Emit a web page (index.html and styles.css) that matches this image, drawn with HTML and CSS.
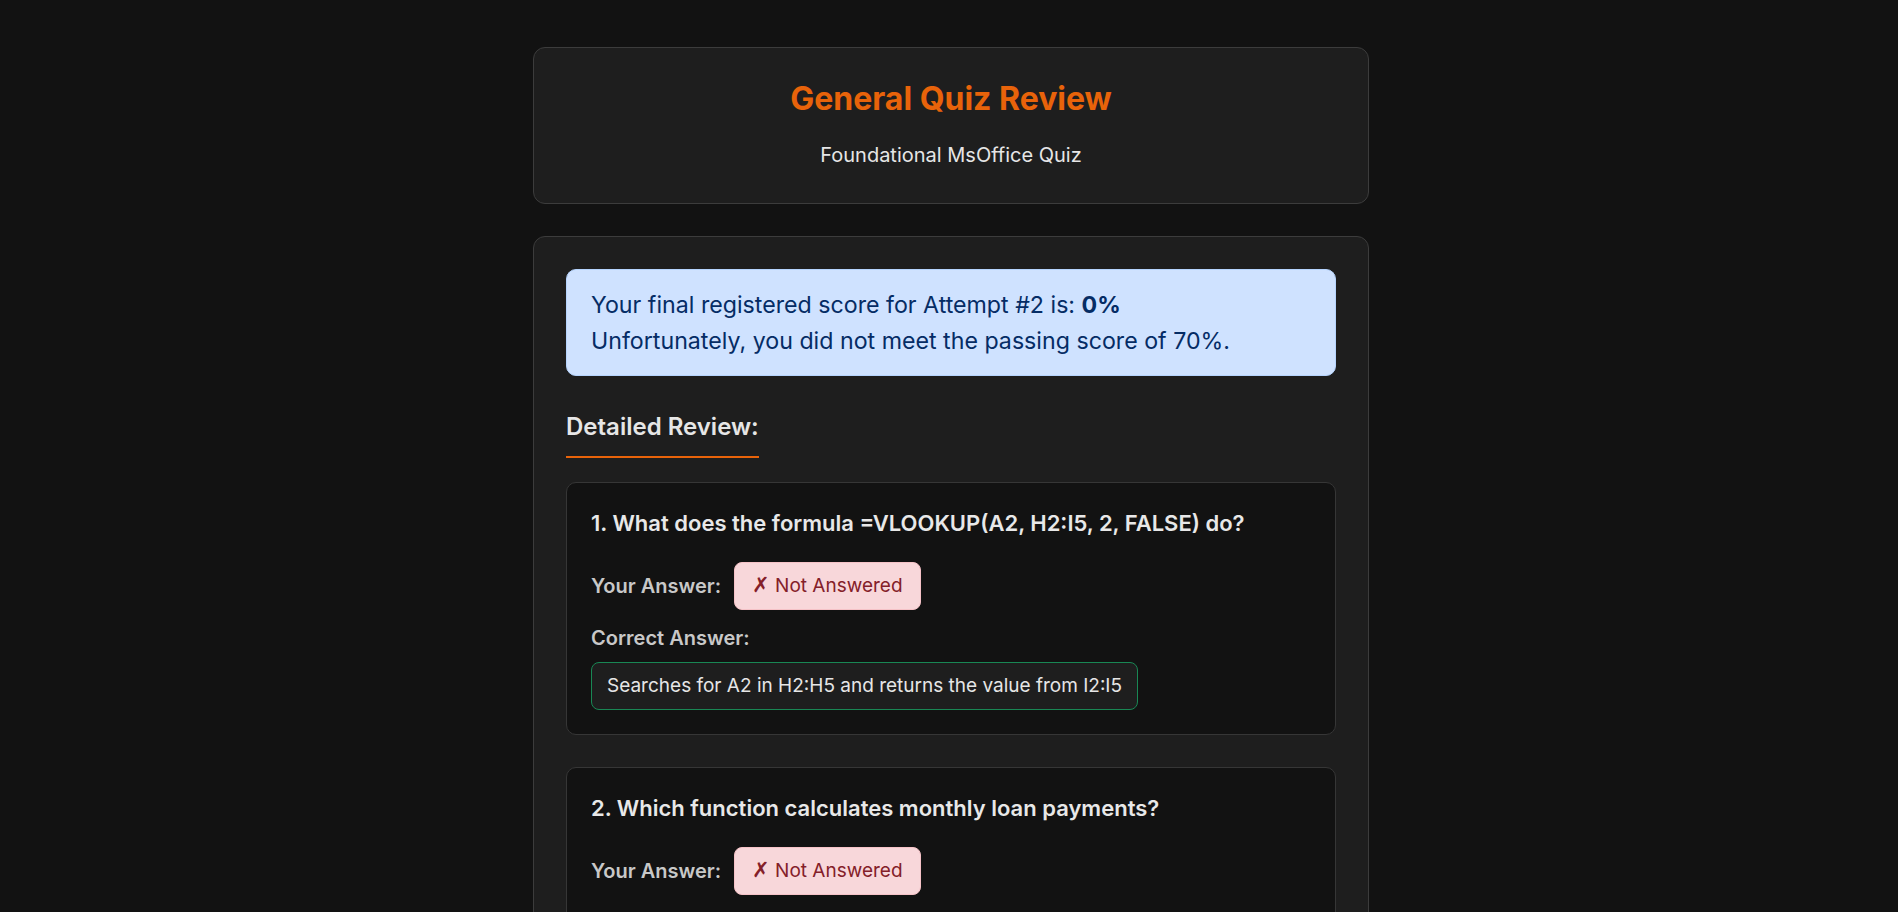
FILE: index.html
```html
<!DOCTYPE html>
<html lang="en">
<head>
<meta charset="utf-8">
<title>General Quiz Review</title>
<link rel="stylesheet" href="styles.css">
</head>
<body>
<div class="container">
  <header class="card header-card">
    <h1 class="title">General Quiz Review</h1>
    <p class="subtitle">Foundational MsOffice Quiz</p>
  </header>

  <main class="card main-card">
    <div class="alert">
      Your final registered score for Attempt #2 is: <strong>0%</strong><br>
      Unfortunately, you did not meet the passing score of 70%.
    </div>

    <h3 class="section-title">Detailed Review:</h3>

    <div class="question-card">
      <h4 class="question">1. What does the formula =VLOOKUP(A2, H2:I5, 2, FALSE) do?</h4>
      <div class="answer-row">
        <span class="label">Your Answer:</span>
        <span class="badge-wrong"><span class="x-icon">✗</span> Not Answered</span>
      </div>
      <div class="label correct-label">Correct Answer:</div>
      <div class="correct-box">Searches for A2 in H2:H5 and returns the value from I2:I5</div>
    </div>

    <div class="question-card">
      <h4 class="question">2. Which function calculates monthly loan payments?</h4>
      <div class="answer-row">
        <span class="label">Your Answer:</span>
        <span class="badge-wrong"><span class="x-icon">✗</span> Not Answered</span>
      </div>
      <div class="label correct-label">Correct Answer:</div>
      <div class="correct-box">=PMT(rate, nper, pv)</div>
    </div>
  </main>
</div>
</body>
</html>
```

FILE: styles.css
```css
* { box-sizing: border-box; }

html, body {
  margin: 0;
  background: #121212;
  color: #e0e0e0;
  font-family: Inter, "Noto Sans", "Liberation Sans", sans-serif;
}

body {
  padding: 0 0 0 4px;
}

.container {
  width: 836px;
  margin: 0 auto;
  padding: 47px 0 40px;
  display: flex;
  flex-direction: column;
  gap: 32px;
}

.card {
  background: #1e1e1e;
  border: 1px solid #3c3c3c;
  border-radius: 12px;
}

.header-card {
  padding: 32px 32px 33px;
  text-align: center;
}

.title {
  margin: 0 0 22px;
  font-size: 32px;
  line-height: 38px;
  font-weight: 700;
  color: #e8630a;
}

.subtitle {
  margin: 0;
  font-size: 20px;
  line-height: 30px;
  color: #e6e6e6;
}

.main-card {
  padding: 32px;
}

.alert {
  background: #cfe2ff;
  border: 1px solid #b6d4fe;
  color: #052c65;
  border-radius: 10px;
  padding: 17px 24px 16px;
  font-size: 23.2px;
  line-height: 36px;
}

.alert strong { font-weight: 700; }

.section-title {
  display: inline-block;
  margin: 36px 0 24px;
  padding-bottom: 15px;
  border-bottom: 2px solid #e8630a;
  font-size: 24px;
  line-height: 29px;
  font-weight: 600;
  color: #e6e6e6;
}

.question-card {
  background: #121212;
  border: 1px solid #363636;
  border-radius: 10px;
  padding: 24px;
  margin-bottom: 32px;
}

.question {
  margin: 0 0 22px;
  font-size: 22px;
  line-height: 33px;
  font-weight: 600;
  color: #e8e8e8;
}

.answer-row {
  display: flex;
  align-items: center;
  gap: 13px;
  margin-bottom: 13px;
}

.label {
  font-size: 20px;
  line-height: 30px;
  font-weight: 600;
  color: #c8c8c8;
}

.correct-label {
  margin-bottom: 9px;
}

.badge-wrong {
  display: inline-block;
  background: #f8d7da;
  border: 1px solid #f5c2c7;
  color: #842029;
  border-radius: 8px;
  padding: 8px 17px;
  font-size: 19px;
  line-height: 30px;
}

.x-icon {
  font-family: "DejaVu Sans", sans-serif;
  font-weight: 700;
  font-size: 21px;
  line-height: 1;
}

.correct-box {
  display: inline-block;
  background: #1e1e1e;
  border: 1px solid #198754;
  border-radius: 8px;
  padding: 8px 15px;
  font-size: 19px;
  line-height: 30px;
  color: #e6e6e6;
}
```
